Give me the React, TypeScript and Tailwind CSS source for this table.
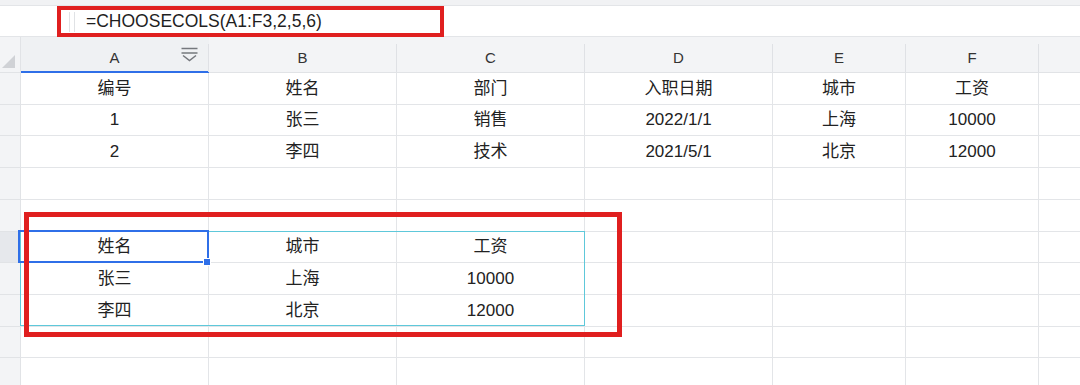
import React from "react";

const COLS = ["A", "B", "C", "D", "E", "F", ""];
const ROW_H = [32, 31, 32, 32, 32, 31, 32, 32, 31, 32];
const H_CLASS: Record<number, string> = { 31: "h-[31px]", 32: "h-[32px]" };

const DATA: string[][] = [
  ["编号", "姓名", "部门", "入职日期", "城市", "工资", ""],
  ["1", "张三", "销售", "2022/1/1", "上海", "10000", ""],
  ["2", "李四", "技术", "2021/5/1", "北京", "12000", ""],
  ["", "", "", "", "", "", ""],
  ["", "", "", "", "", "", ""],
  ["姓名", "城市", "工资", "", "", "", ""],
  ["张三", "上海", "10000", "", "", "", ""],
  ["李四", "北京", "12000", "", "", "", ""],
  ["", "", "", "", "", "", ""],
  ["", "", "", "", "", "", ""],
];

const FONT = { fontFamily: '"Liberation Sans", Arial, "Noto Sans CJK SC", sans-serif' };

function FilterIcon() {
  return (
    <svg width="17" height="15" viewBox="0 0 17 15" fill="none" stroke="#75787d" strokeWidth="1.5">
      <line x1="0.5" y1="1.5" x2="16.5" y2="1.5" />
      <line x1="0.5" y1="6" x2="16.5" y2="6" />
      <polyline points="2,8.5 8.5,13.5 15,8.5" />
    </svg>
  );
}

export default function App() {
  return (
    <div className="relative w-[1080px] h-[385px] overflow-hidden bg-white text-[#222]" style={FONT}>
      {/* top strip */}
      <div className="h-[6px] bg-[#f1f2f4] border-b border-[#e3e5e8]" />
      {/* formula bar */}
      <div className="h-[31px] flex border-b border-[#e3e5e8] bg-white">
        <div className="w-[57px]" />
        <div className="w-[387px] h-[31px] border-4 border-[#e01f1f] flex items-center relative">
          <div className="ml-[8px] w-px h-[20px] bg-[#e0e2e5]" />
          <div className="ml-[4px] w-px h-[20px] bg-[#e0e2e5]" />
          <span className="ml-[11px] text-[17.5px] leading-none text-[#1f1f1f]">=CHOOSECOLS(A1:F3,2,5,6)</span>
        </div>
        <div className="flex-1" />
      </div>

      {/* grid */}
      <div className="grid grid-cols-[21px_188px_188px_188px_188px_133px_133px_1fr]">
        {/* header row */}
        <div className="h-[36px] bg-[#f3f4f6] border-r border-b border-[#e1e3e6] relative">
          <svg className="absolute left-[2px] top-[18px]" width="14" height="14" viewBox="0 0 14 14">
            <polygon points="13,0 13,13 0,13" fill="#d0d2d6" />
          </svg>
        </div>
        {COLS.map((c, i) => (
          <div
            key={c + i}
            className={
              "h-[36px] pt-[7px] border-b border-[#e1e3e6] " +
              (i === 0 ? "bg-[#eff1f3]" : "bg-[#f3f4f6]")
            }
          >
            <div
              className={
                "h-[28px] relative flex items-center justify-center text-[15px] text-[#333] " +
                (i < 6 ? "border-r border-[#dfe1e5]" : "")
              }
            >
              {c}
              {i === 0 && (
                <span className="absolute right-[10px] top-[3px]">
                  <FilterIcon />
                </span>
              )}
            </div>
            {i === 0 && <div className="h-[2px] -mt-[1px] bg-[#2f6fe8]" />}
          </div>
        ))}

        {/* data rows */}
        {DATA.map((row, r) => (
          <React.Fragment key={r}>
            <div
              className={
                H_CLASS[ROW_H[r]] +
                " border-r border-b border-[#e1e3e6] " +
                (r === 5 ? "bg-[#e6e8ec]" : "bg-[#f3f4f6]")
              }
            />
            {row.map((v, c) => (
              <div
                key={c}
                className={
                  H_CLASS[ROW_H[r]] +
                  " border-b border-[#e3e5e8] flex items-center justify-center text-[17px] " +
                  (c < 6 ? "border-r" : "")
                }
              >
                {v}
              </div>
            ))}
          </React.Fragment>
        ))}
      </div>

      {/* result range outline (cyan) */}
      <div className="absolute left-[20px] top-[231px] w-[565px] h-[95px] border border-[#5ec8da] pointer-events-none" />
      {/* selected cell */}
      <div className="absolute left-[18px] top-[230px] w-[191px] h-[33px] border-2 border-[#2f6fe8] pointer-events-none" />
      <div className="absolute left-[203px] top-[258px] w-[8px] h-[8px] bg-[#2f6fe8] border border-white pointer-events-none" />
      {/* red annotation box */}
      <div className="absolute left-[24px] top-[212px] w-[598px] h-[125px] border-[5px] border-[#e01f1f] pointer-events-none" />
    </div>
  );
}
